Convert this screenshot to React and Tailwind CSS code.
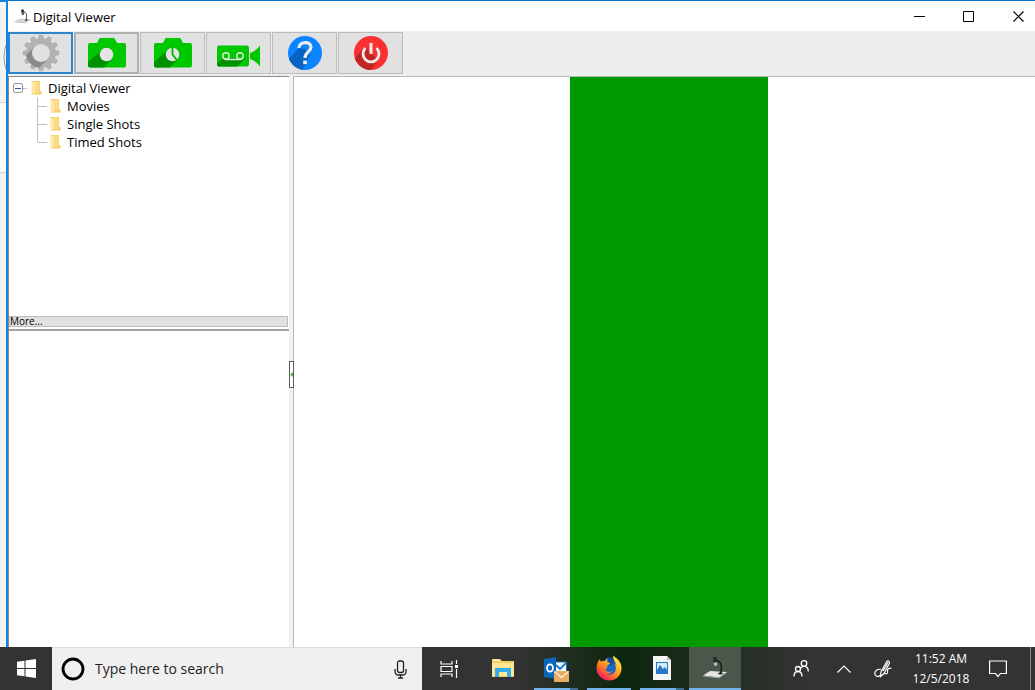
import React, { useState } from 'react';

const folders = ['Movies', 'Single Shots', 'Timed Shots'];

const AppIcon = ({ className, light }) => (
  <svg className={className} viewBox="0 0 26 26" fill="none" aria-hidden="true">
    <path d="M1 20.500 8 16l17 1-8 5.500z" fill={light ? '#e4e6e4' : '#d3d6d6'} />
    <path d="M1 20.500 17 22.500l8-5.500v.8l-8 5.700-16-2z" fill="#9a9d9a" />
    <path d="M18.500 18.500c1.500-5 1-10-1.500-12l-3-1" stroke={light ? '#121612' : '#333'} strokeWidth="1.400" />
    <path d="m11 2.500 3.500-.7.8 5-3.800.7z" fill={light ? '#23282a' : '#222'} />
    <path d="m11.500 7.800 3.500-.6.3 3.300-3 .5z" fill={light ? '#b7bbb9' : '#555'} />
    <ellipse cx="18.500" cy="18.500" rx="2.500" ry="1" fill="#222" />
  </svg>
);

const GearIcon = () => (
  <svg className="h-[38px] w-[38px]" viewBox="0 0 38 38" aria-hidden="true">
    <defs>
      <clipPath id="gearClip">
        <circle cx="19" cy="19" r="15" />
      </clipPath>
    </defs>
    <g fill="#b2b2b2">
      <circle cx="19" cy="19" r="14.800" />
      {[0, 30, 60, 90, 120, 150, 180, 210, 240, 270, 300, 330].map((a) => (
        <path key={a} d="M15.800 5.500 17 .7h4l1.200 4.800z" transform={`rotate(${a} 19 19)`} />
      ))}
    </g>
    <path d="M12.500 12.500 0 25v13h13l12.500-12.500z" fill="#8a8a8a" clipPath="url(#gearClip)" />
    <circle cx="19" cy="19" r="9" fill="#e1e1e1" />
  </svg>
);

const CameraIcon = ({ timed }) => (
  <svg className="h-[30px] w-[38px]" viewBox="0 0 38 30" aria-hidden="true">
    <path d="M2 5h7l2-4q.4-1 1.500-1h13q1 0 1.500 1l2 4h7q2 0 2 2v20.500q0 2-2 2H2q-2 0-2-2V7q0-2 2-2" fill="#00c800" />
    <path d="M14 12 0 24v3.500q0 2 2 2h14L24 21z" fill="#009100" />
    <circle cx="18.500" cy="16.500" r="6.800" fill="#e4e4e4" />
    {timed && <path d="M18.500 9v7.500l4.700 6" fill="none" stroke="#00b400" strokeWidth="1.800" />}
  </svg>
);

const MovieIcon = () => (
  <svg className="mt-1.5 h-[22px] w-[43px]" viewBox="0 0 43 22" fill="none" aria-hidden="true">
    <rect y=".5" width="32" height="21" rx="2" fill="#00c800" />
    <path d="M6 13 0 18v1.500q0 2 2 2h18l8-8z" fill="#009100" />
    <path d="M33 8v6q6 2 10 7.500V.5Q39 6 33 8" fill="#00c800" />
    <circle cx="9" cy="11" r="3.200" stroke="#d8ead8" strokeWidth="1.500" />
    <circle cx="23" cy="11" r="3.200" stroke="#d8ead8" strokeWidth="1.500" />
    <path d="M8 14.500h16" stroke="#d8ead8" strokeWidth="1.500" />
  </svg>
);

const HelpIcon = () => (
  <svg className="h-[34px] w-[34px]" viewBox="0 0 34 34" fill="none" aria-hidden="true">
    <defs>
      <clipPath id="helpClip">
        <circle cx="17" cy="17" r="17" />
      </clipPath>
    </defs>
    <circle cx="17" cy="17" r="17" fill="#0a84ff" />
    <path d="M11 12-3 27l14 14 11-22-5-6z" fill="#0863c4" clipPath="url(#helpClip)" />
    <path d="M11 12c0-7 12-7 12-1 0 5-6 5-6 11" stroke="#ececec" strokeWidth="3.200" />
    <rect x="15.200" y="24.500" width="3.600" height="3.600" fill="#ececec" />
  </svg>
);

const PowerIcon = () => (
  <svg className="h-[34px] w-[34px]" viewBox="0 0 34 34" fill="none" aria-hidden="true">
    <defs>
      <clipPath id="powerClip">
        <circle cx="17" cy="17" r="17" />
      </clipPath>
    </defs>
    <circle cx="17" cy="17" r="17" fill="#fb3030" />
    <path d="M11 11-5 28l18 12 11-16z" fill="#c32424" clipPath="url(#powerClip)" />
    <path d="M11.500 12a8 8 0 1 0 11 0" stroke="#ececec" strokeWidth="2.800" />
    <path d="M17 7v11" stroke="#ececec" strokeWidth="3" />
  </svg>
);

const FolderIcon = () => (
  <svg className="h-[14px] w-[11px] shrink-0" viewBox="0 0 11 14" aria-hidden="true">
    <path d="M1 0h8v10h1.500v3.500H1z" fill="#f3cb66" />
    <path d="M4 .5h4.500V12H4z" fill="#fbdc85" />
    <path d="m.5 0 3.500 2v11.500L.5 12z" fill="#ffe8a6" />
  </svg>
);

const tools = [
  { label: 'Settings', icon: <GearIcon />, border: 'border-2 border-[#2a86d1]' },
  { label: 'Single shot', icon: <CameraIcon />, border: 'border-2 border-[#b0b0b0]' },
  { label: 'Timed shots', icon: <CameraIcon timed />, border: 'border border-[#bcbcbc]' },
  { label: 'Record movie', icon: <MovieIcon />, border: 'border border-[#bcbcbc]' },
  { label: 'Help', icon: <HelpIcon />, border: 'border border-[#bcbcbc]' },
  { label: 'Exit', icon: <PowerIcon />, border: 'border border-[#bcbcbc]' },
];

const TitleBar = () => (
  <header className="flex h-[30px] shrink-0 items-center bg-white">
    <AppIcon className="ml-1.5 h-[17px] w-[17px]" />
    <h1 className="ml-0.5 pt-0.5 text-[13px] leading-[18px]">Digital Viewer</h1>
    <div className="ml-auto flex h-full">
      <button aria-label="Minimize" className="flex w-[50px] items-center justify-center">
        <svg className="h-[11px] w-[11px]" viewBox="0 0 11 11" aria-hidden="true">
          <path d="M0 5.500h11" stroke="#000" />
        </svg>
      </button>
      <button aria-label="Maximize" className="flex w-[49px] items-center justify-center">
        <svg className="h-[11px] w-[11px]" viewBox="0 0 11 11" fill="none" aria-hidden="true">
          <path d="M.5.5h10v10H.5z" stroke="#000" />
        </svg>
      </button>
      <button aria-label="Close" className="flex w-[42px] items-center justify-end pr-[11px]">
        <svg className="h-[11px] w-[11px]" viewBox="0 0 11 11" aria-hidden="true">
          <path d="m.5.5 10 10m0-10-10 10" stroke="#000" strokeWidth="1.200" />
        </svg>
      </button>
    </div>
  </header>
);

const Toolbar = () => (
  <div className="flex h-[45px] shrink-0 gap-px bg-[#eeeeee] pt-px">
    {tools.map((tool) => (
      <button
        key={tool.label}
        aria-label={tool.label}
        className={`flex h-[42px] w-[65px] items-center justify-center bg-[#e1e1e1] ${tool.border}`}
      >
        {tool.icon}
      </button>
    ))}
  </div>
);

const FolderTree = () => {
  const [open, setOpen] = useState(true);

  return (
    <nav aria-label="Folders" className="h-[239px] shrink-0 pt-0.5 pl-1 text-[13px] leading-[18px]">
      <div className="flex items-center">
        <button
          aria-label="Toggle Digital Viewer"
          onClick={() => setOpen(!open)}
          className="flex h-[10px] w-[10px] items-center justify-center rounded-xs border border-[#9a9a9a] bg-[#fafafa]"
        >
          <span className="h-px w-1.5 bg-[#2f55a0]" />
        </button>
        <span className="mr-1 w-1 border-t border-dotted border-[#aaaaaa]" />
        <FolderIcon />
        <span className="ml-1.5">Digital Viewer</span>
      </div>
      {open && (
        <ul className="pl-6">
          {folders.map((name) => (
            <li key={name} className="flex h-[18px] items-center">
              <span
                className={
                  name === 'Timed Shots'
                    ? 'h-[9px] self-start border-l border-[#c0c0c0]'
                    : 'h-full border-l border-[#c0c0c0]'
                }
              />
              <span className="mr-[3px] w-[9px] border-t border-[#c0c0c0]" />
              <FolderIcon />
              <span className="ml-1.5">{name}</span>
            </li>
          ))}
        </ul>
      )}
    </nav>
  );
};

const SidePanel = () => (
  <aside className="flex w-[281px] shrink-0 flex-col border-t border-l border-[#8a8a8a] bg-white">
    <FolderTree />
    <button className="mr-px flex h-[11px] shrink-0 items-center border border-[#bcbcbc] bg-[#e1e1e1] text-[10px] leading-[9px]">
      More...
    </button>
    <div className="mt-[2px] flex-1 border-t-2 border-[#a0a3a0]" />
  </aside>
);

const Splitter = () => (
  <div className="flex w-[5px] shrink-0 flex-col border-r border-[#b8b8b8] bg-[#f3f3f3] pt-[285px]">
    <button aria-label="Collapse panel" className="-mr-px flex h-[27px] items-center justify-end border border-[#5a5a5a] bg-white">
      <svg className="h-[5px] w-[3px]" viewBox="0 0 3 5" aria-hidden="true">
        <path d="M3 0v5L0 2.500z" fill="#3cc41c" />
      </svg>
    </button>
  </div>
);

const ExplorerIcon = () => (
  <svg className="h-5 w-6" viewBox="0 0 24 20" aria-hidden="true">
    <path d="M1 1h8l2 2h12v16H1z" fill="#f5cf61" />
    <path d="M1 5h22v13H1z" fill="#ffe692" />
    <path d="M2 1.500h6l1 1.500H2z" fill="#fff3c4" />
    <path d="M4 10h16v9h-4v-5H8v5H4z" fill="#33aee9" />
  </svg>
);

const OutlookIcon = () => (
  <svg className="mt-1 h-[27px] w-[27px]" viewBox="0 0 27 27" aria-hidden="true">
    <path d="M12 6h11v11H12z" fill="#f4f8fc" />
    <path d="m13 9 4 4 6-6" fill="none" stroke="#1677c8" strokeWidth="1.800" />
    <path d="M12 6h11.500v11H12" fill="none" stroke="#1677c8" />
    <path d="m1 3 12-2v22L1 21z" fill="#0b66b8" />
    <ellipse cx="7" cy="12" rx="3" ry="3.700" fill="none" stroke="#fff" strokeWidth="1.800" />
    <path d="M11 15h15v11H11z" fill="#e7ac66" />
    <path d="m11.500 15.500 7 6 7-6" fill="none" stroke="#fff1dc" strokeWidth="1.300" />
  </svg>
);

const FirefoxIcon = () => (
  <svg className="h-[26px] w-[26px]" viewBox="0 0 26 26" aria-hidden="true">
    <defs>
      <linearGradient id="fox" x1=".85" y1=".05" x2=".2" y2=".9">
        <stop offset="0" stopColor="#fff04a" />
        <stop offset=".4" stopColor="#ffad24" />
        <stop offset=".7" stopColor="#ff6b2c" />
        <stop offset="1" stopColor="#ed1c62" />
      </linearGradient>
    </defs>
    <circle cx="13" cy="13" r="9" fill="#1767c9" />
    <path d="M9 4c3-3 8-2 10 1l-4 6z" fill="#174a9c" />
    <path
      d="M4 4c0 1 .4 2 1 2.500 1-.5 2.500-.5 3.500-.2C9.500 5 10.500 4 12 3.500c-.8 1.500-1 2.500-.5 3.800l2.500.5c0 1.500-2 2-2.500 2.500-.5 1 .3 2-.5 2.500-1 .6-1.500 1.200-1 2.500 1 2.500 5 1.500 6.500.5-1 2.500-4 3.500-6.500 3 3 2 7 1 9-2 1.500-3 1-6-.5-8 1 .5 1.500 1 2 2 0-3-3.500-5-3.500-10C22 4 26 8 25.500 14c-.5 7-6 11.500-12.500 11.500C6 25.500.5 20 .5 13 .5 9 2 6 4 4"
      fill="url(#fox)"
    />
  </svg>
);

const PictureFileIcon = () => (
  <svg className="h-6 w-[18px]" viewBox="0 0 18 24" aria-hidden="true">
    <path d="M0 0h14l4 4v20H0z" fill="#f5f5f5" />
    <path d="M14 0v4h4z" fill="#b8b8b8" />
    <path d="M3 6h12v12H3z" fill="#2878c8" />
    <path d="M4 7h10v7l-2-3-2 2-3-4-3 5z" fill="#d8ecff" />
  </svg>
);

const taskApps = [
  { label: 'File Explorer', icon: <ExplorerIcon />, line: '' },
  { label: 'Outlook', icon: <OutlookIcon />, line: 'bg-[#72b2ea]', stacked: true },
  { label: 'Firefox', icon: <FirefoxIcon />, line: 'bg-[#72b2ea]' },
  { label: 'Pictures', icon: <PictureFileIcon />, line: 'bg-[#72b2ea]', stacked: true },
];

const Taskbar = () => (
  <footer className="flex h-[43px] shrink-0 bg-linear-to-r from-[#333333] from-50% via-[#0c260c] via-60% to-[#333333] to-78% text-white">
    <button aria-label="Start" className="flex w-[52px] shrink-0 items-center justify-center bg-[#333333]">
      <svg className="h-[19px] w-[19px]" viewBox="0 0 19 19" fill="#fff" aria-hidden="true">
        <path d="m0 2.800 7.500-1V9H0zM8.500 1.600 19 0v9H8.500zM0 10h7.500v7.200l-7.500-1zm8.500 0H19v9l-10.500-1.600z" />
      </svg>
    </button>
    <div className="flex w-[370px] shrink-0 items-center border-t border-[#dcdcdc] bg-[#f0f0f0] text-[#222222]">
      <svg className="ml-[9px] h-6 w-6 shrink-0" viewBox="0 0 24 24" fill="none" aria-hidden="true">
        <circle cx="12" cy="12" r="10" stroke="#000" strokeWidth="2.800" />
      </svg>
      <input
        type="text"
        aria-label="Search"
        placeholder="Type here to search"
        className="ml-2.5 min-w-0 flex-1 bg-transparent text-[14px] leading-5 outline-none placeholder:text-[#222222]"
      />
      <button aria-label="Voice search" className="flex w-11 items-center justify-center">
        <svg className="h-[19px] w-[13px]" viewBox="0 0 13 19" fill="none" stroke="#222" strokeWidth="1.300" aria-hidden="true">
          <rect x="3.500" y="1" width="6" height="11.500" rx="2" />
          <path d="M1 9v2.500q0 3.500 3.500 3.500h4q3.500 0 3.500-3.500V9M6.500 15v3M4 18h5" />
        </svg>
      </button>
    </div>
    <button aria-label="Task view" className="mr-px flex w-[54px] shrink-0 items-center justify-center">
      <svg className="h-[18px] w-[19px]" viewBox="0 0 19 18" fill="none" stroke="#fff" strokeWidth="1.200" aria-hidden="true">
        <path d="M1 1v3h11V1M1 17v-3h11v3M1 6.500h11v5H1zM16.500 0v4M16.500 9v9" />
        <path d="M15 5h3v3h-3z" fill="#fff" stroke="none" />
      </svg>
    </button>
    <div className="flex gap-px">
      {taskApps.map((app) => (
        <button key={app.label} aria-label={app.label} className="flex w-[52px] flex-col items-center">
          <span className="flex flex-1 items-center">{app.icon}</span>
          <span className="flex h-[2px] w-11">
            <span className={`flex-1 ${app.line}`} />
            {app.stacked && <span className="w-2 bg-[#3e6c94]" />}
          </span>
        </button>
      ))}
      <button aria-label="Digital Viewer" className="flex w-[52px] flex-col items-center bg-[#4a574a]">
        <span className="flex flex-1 items-center">
          <AppIcon light className="h-[26px] w-[26px]" />
        </span>
        <span className="h-[2px] w-full bg-[#72b2ea]" />
      </button>
    </div>
    <div className="ml-auto flex">
      <button aria-label="People" className="flex w-[46px] items-center justify-center">
        <svg className="h-[17px] w-[16px]" viewBox="0 0 16 17" fill="none" stroke="#fff" strokeWidth="1.300" aria-hidden="true">
          <circle cx="11" cy="3.500" r="2.800" />
          <circle cx="5" cy="9" r="2.500" />
          <path d="M1 16.500q0-5 4-5t4 5M8 8q3-3.500 6-.5 1.300 1.300 1.300 4" />
        </svg>
      </button>
      <button aria-label="Show hidden icons" className="flex w-10 items-center justify-center">
        <svg className="h-2 w-[14px]" viewBox="0 0 14 8" fill="none" stroke="#fff" strokeWidth="1.200" aria-hidden="true">
          <path d="m.5 7.500 6.500-6.500 6.500 6.500" />
        </svg>
      </button>
      <button aria-label="Windows Ink" className="flex w-[38px] items-center justify-center">
        <svg className="h-[18px] w-[18px]" viewBox="0 0 18 18" fill="none" stroke="#fff" strokeWidth="1.200" aria-hidden="true">
          <path d="M6.500 16.500 7 12 12.500 2q1.300-1.500 2.300-.8t.4 2.300L10 13.500zM9 11l5-8.500" />
          <path d="M7 9.500C3 8.500.8 11 .8 13.500S4 17.500 6 15.500M10 13c3 2 4-.5 3.500-2s1.500-3.500 4-2.500" />
        </svg>
      </button>
      <button className="flex w-[78px] flex-col items-center justify-center text-[12px] leading-5">
        <span>11:52 AM</span>
        <span>12/5/2018</span>
      </button>
      <button aria-label="Notifications" className="mr-3.5 flex w-9 items-center justify-center">
        <svg className="h-[18px] w-[18px]" viewBox="0 0 18 18" fill="none" stroke="#fff" strokeWidth="1.200" aria-hidden="true">
          <path d="M.6 1h16.800v12.500h-6L9 16.500l-2.500-3H.6z" />
        </svg>
      </button>
      <button aria-label="Show desktop" className="w-[5px] border-l border-[#8a8a8a]" />
    </div>
  </footer>
);

const App = () => {
  return (
    <div className="flex h-screen flex-col overflow-hidden bg-white font-['Open_Sans','Noto_Sans',sans-serif] text-black">
      <div className="flex min-h-0 flex-1">
        {/* Edge of the window behind */}
        <div className="flex w-1.5 shrink-0 flex-col border-t-2 border-[#1683d8] bg-[#f3f3f3]">
          <svg className="mt-[43px] h-6 w-1.5" viewBox="0 0 6 24" fill="none" aria-hidden="true">
            <path d="M6 0q-4 12 0 24" stroke="#999" />
          </svg>
          <div className="mt-[33px] h-[71px] border-y border-[#d2d2d2] bg-[#fafafa]" />
        </div>
        <div className="flex min-w-0 flex-1 flex-col border-t border-l-2 border-t-[#0078d7] border-l-[#1683e0]">
          <TitleBar />
          <Toolbar />
          <main className="flex min-h-0 flex-1">
            <SidePanel />
            <Splitter />
            <section aria-label="Preview" className="flex flex-1 justify-center border-t border-[#b8b8b8] bg-white pl-2">
              <div className="w-[198px] bg-[#009900]" />
            </section>
          </main>
        </div>
      </div>
      <Taskbar />
    </div>
  );
};

export default App;
